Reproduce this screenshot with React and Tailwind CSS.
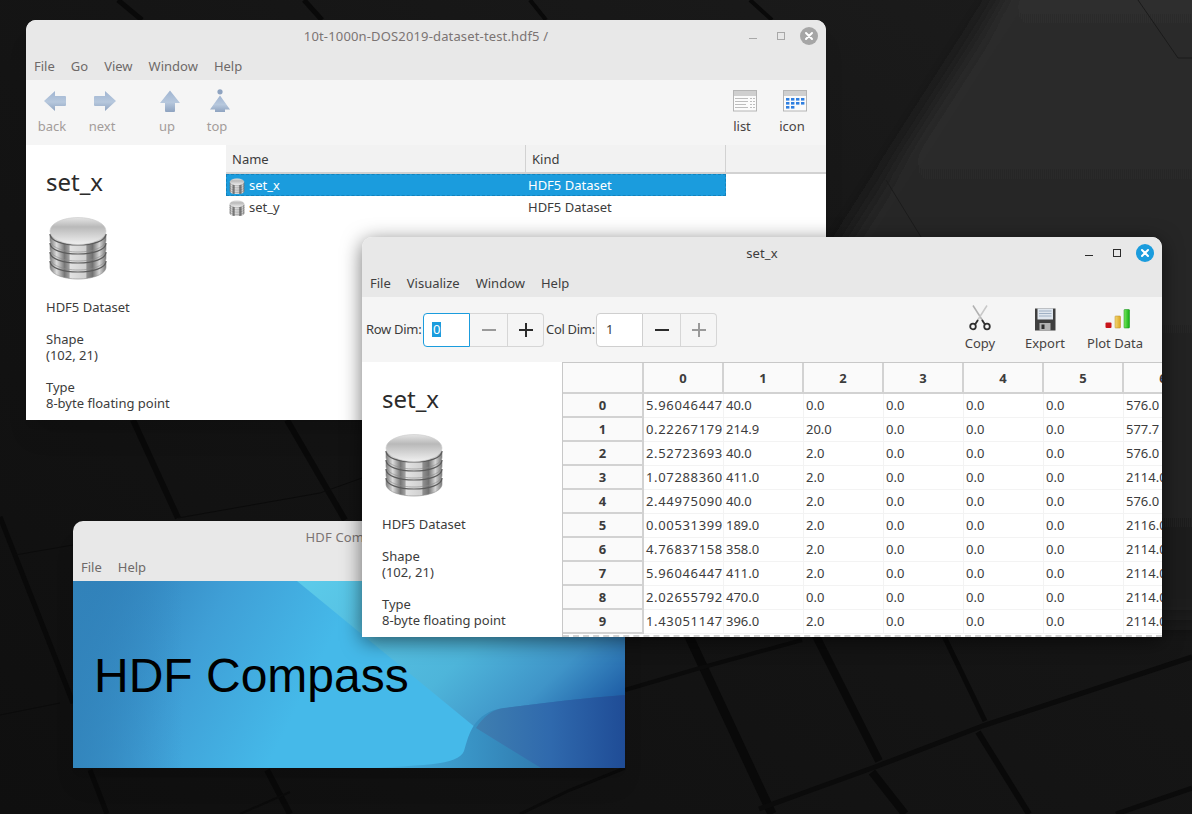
import React from 'react';

const rows = [
  ['5.96046447e-07', '40.0', '0.0', '0.0', '0.0', '0.0', '576.0'],
  ['0.22267179e-01', '214.9', '20.0', '0.0', '0.0', '0.0', '577.7'],
  ['2.52723693e-05', '40.0', '2.0', '0.0', '0.0', '0.0', '576.0'],
  ['1.07288360e-06', '411.0', '2.0', '0.0', '0.0', '0.0', '2114.0'],
  ['2.44975090e-05', '40.0', '2.0', '0.0', '0.0', '0.0', '576.0'],
  ['0.00531399', '189.0', '2.0', '0.0', '0.0', '0.0', '2116.0'],
  ['4.76837158e-07', '358.0', '2.0', '0.0', '0.0', '0.0', '2114.0'],
  ['5.96046447e-07', '411.0', '2.0', '0.0', '0.0', '0.0', '2114.0'],
  ['2.02655792e-06', '470.0', '0.0', '0.0', '0.0', '0.0', '2114.0'],
  ['1.43051147e-06', '396.0', '2.0', '0.0', '0.0', '0.0', '2114.0'],
];

function Wallpaper() {
  return (
    <svg className="absolute inset-0" width="1192" height="814" viewBox="0 0 1192 814">
      <defs>
        <linearGradient id="wall" x1="0" y1="1" x2="1" y2="0">
          <stop offset="0" stopColor="#0f0f0f" />
          <stop offset="0.55" stopColor="#151515" />
          <stop offset="1" stopColor="#1c1c1c" />
        </linearGradient>
        <linearGradient id="wallLight" x1="0" y1="0" x2="0" y2="1">
          <stop offset="0" stopColor="#2e2e2e" />
          <stop offset="1" stopColor="#1d1d1d" />
        </linearGradient>
        <filter id="soft"><feGaussianBlur stdDeviation="11" /></filter>
      </defs>
      <rect width="1192" height="814" fill="url(#wall)" />
      <polygon points="1026,-40 1232,-40 1232,620 840,620 840,250" fill="url(#wallLight)" filter="url(#soft)" />
      <g stroke="#090909" fill="none">
        <path d="M686 630L772 814" strokeWidth="9" />
        <path d="M813 630L879 761" strokeWidth="8" />
        <path d="M872 772L905 814" strokeWidth="8" />
        <path d="M941 630L985 721" strokeWidth="5" />
        <path d="M978 732L1029 814" strokeWidth="6" />
        <path d="M133 420L178 518" strokeWidth="6" />
        <path d="M287 420L345 520" strokeWidth="6" />
        <path d="M0 517L73 703" strokeWidth="5" />
        <path d="M90 770L107 814" strokeWidth="5" />
        <path d="M267 770L290 814" strokeWidth="6" />
        <path d="M118 0L142 20" strokeWidth="5" />
        <path d="M304 0L322 20" strokeWidth="5" />
        <path d="M530 0L546 20" strokeWidth="4" />
        <path d="M750 0L772 20" strokeWidth="4" />
      </g>
      <g stroke="#0b0b0b" fill="none">
        <path d="M759 809L875 767L985 725L1192 657" strokeWidth="5" />
        <path d="M625 690L700 668L802 640" strokeWidth="4" />
        <path d="M1116 814L1192 788" strokeWidth="5" />
        <path d="M15 555L73 545" strokeWidth="1" />
        <path d="M0 715L60 703" strokeWidth="1" />
        <path d="M178 518L320 493L362 478" strokeWidth="1" />
        <path d="M625 768L570 790L520 814" strokeWidth="3" />
        <path d="M290 792L240 814" strokeWidth="2" />
      </g>
      <path d="M1138 0L1178 58H1192M886 180L921 237" stroke="#1b1b1b" fill="none" />
    </svg>
  );
}

function DatasetIcon({ size = 62 }) {
  return (
    <svg width={size} height={(size * 64) / 62} viewBox="0 0 62 64">
      <defs>
        <linearGradient id="dsBand" x1="0" y1="0" x2="1" y2="0">
          <stop offset="0" stopColor="#7c7c7c" />
          <stop offset="0.12" stopColor="#dcdcdc" />
          <stop offset="0.26" stopColor="#777777" />
          <stop offset="0.34" stopColor="#a0a0a0" />
          <stop offset="0.36" stopColor="#e2e2e2" />
          <stop offset="0.64" stopColor="#d0d0d0" />
          <stop offset="0.66" stopColor="#8f8f8f" />
          <stop offset="0.76" stopColor="#727272" />
          <stop offset="0.88" stopColor="#d6d6d6" />
          <stop offset="1" stopColor="#787878" />
        </linearGradient>
        <linearGradient id="dsTop" x1="0" y1="0" x2="0" y2="1">
          <stop offset="0" stopColor="#e4e4e4" />
          <stop offset="0.35" stopColor="#b9b9b9" />
          <stop offset="1" stopColor="#f0f0f0" />
        </linearGradient>
      </defs>
      {[40, 31, 22, 13].map((y) => (
        <g key={y}>
          <path
            d={`M3 ${y + 5}V${y + 11}C3 ${y + 18} 16 ${y + 23} 31 ${y + 23}S59 ${y + 18} 59 ${y + 11}V${y + 5}Z`}
            fill="url(#dsBand)"
            stroke="#8a8a8a"
            strokeWidth="0.6"
          />
          <path
            d={`M3 ${y + 5}C3 ${y + 12} 16 ${y + 16} 31 ${y + 16}S59 ${y + 12} 59 ${y + 5}`}
            fill="none"
            stroke="#5c5c5c"
            strokeWidth="1.2"
          />
        </g>
      ))}
      <ellipse cx="31" cy="15" rx="28" ry="13.5" fill="url(#dsTop)" stroke="#c9c9c9" strokeWidth="0.6" />
    </svg>
  );
}

function NavIcon({ kind }) {
  const paths = {
    back: 'M1 12L12 2V7H22Q23 7 23 8V16Q23 17 22 17H12V22Z',
    next: 'M23 12L12 2V7H2Q1 7 1 8V16Q1 17 2 17H12V22Z',
    up: 'M12 1.5L22 14H17V22Q17 23 16 23H8Q7 23 7 22V14H2Z',
    top: 'M12 6.5L22 20.5H17V23H7V20.5H2Z',
  };
  return (
    <svg width="24" height="24" viewBox="0 0 24 24">
      <defs>
        <linearGradient id="navFill" x1="0" y1="0" x2="0" y2="1">
          <stop offset="0" stopColor="#9fb4d1" />
          <stop offset="0.55" stopColor="#b7c8dd" />
          <stop offset="1" stopColor="#8ea3c0" />
        </linearGradient>
      </defs>
      <path d={paths[kind]} fill="url(#navFill)" />
      {kind === 'top' && <circle cx="12" cy="2.8" r="2.6" fill="#8ea3c0" />}
    </svg>
  );
}

function ViewIcon({ grid }) {
  return (
    <svg width="24" height="22" viewBox="0 0 24 22">
      <rect x="0.5" y="0.5" width="23" height="20.5" fill="#fbfbfb" stroke="#b5b5b5" />
      <rect x="1" y="1" width="22" height="5" fill="#cfcfcf" />
      {grid ? (
        [8, 12, 16].map((y) =>
          [3, 8, 13, 18].map((x) =>
            y === 16 && x > 8 ? null : <rect key={`${x}-${y}`} x={x} y={y} width="3.4" height="2.6" fill="#2f7fe0" />
          )
        )
      ) : (
        <g fill="#bdbdbd">
          <rect x="2" y="8" width="13" height="1" />
          <rect x="2" y="11" width="13" height="1" />
          <rect x="2" y="14" width="11" height="1" />
          <rect x="2" y="17" width="13" height="1" />
          <rect x="17" y="8" width="2" height="1" />
          <rect x="20" y="8" width="2" height="1" />
          <rect x="17" y="11" width="2" height="1" />
          <rect x="20" y="11" width="2" height="1" />
          <rect x="17" y="14" width="2" height="1" />
          <rect x="20" y="14" width="2" height="1" />
          <rect x="17" y="17" width="2" height="1" />
          <rect x="20" y="17" width="2" height="1" />
        </g>
      )}
    </svg>
  );
}

function ScissorsIcon() {
  return (
    <svg width="24" height="26" viewBox="0 0 24 26">
      <path d="M5 0.5L15.5 17" stroke="#b0b0b0" strokeWidth="1.5" />
      <path d="M19 0.5L8.5 17" stroke="#c8c8c8" strokeWidth="1.5" />
      <circle cx="5" cy="21.5" r="2.8" fill="none" stroke="#2f2f2f" strokeWidth="1.8" />
      <circle cx="19" cy="21.5" r="2.8" fill="none" stroke="#2f2f2f" strokeWidth="1.8" />
      <path d="M7 19.5L10 15M17 19.5L14 15" stroke="#2f2f2f" strokeWidth="1.8" />
    </svg>
  );
}

function FloppyIcon() {
  return (
    <svg width="22" height="23" viewBox="0 0 22 23">
      <path d="M1 0.5H21.5V22.5H1Z" fill="#3f3f3f" />
      <rect x="3.5" y="0.5" width="15.5" height="11" fill="#dfe6ee" />
      <path d="M5 3H17.5M5 5.5H17.5M5 8H17.5" stroke="#9fb0c4" strokeWidth="1" />
      <rect x="5.5" y="15" width="11" height="7.5" fill="#b4b4b4" />
      <rect x="7.5" y="16.5" width="3" height="4.5" fill="#303030" />
    </svg>
  );
}

function BarsIcon() {
  return (
    <svg width="26" height="20" viewBox="0 0 26 20" className="ml-[6px] mb-[2px]">
      <defs>
        <linearGradient id="barGreen" x1="0" y1="0" x2="1" y2="0">
          <stop offset="0" stopColor="#7be85f" />
          <stop offset="1" stopColor="#0fae11" />
        </linearGradient>
        <linearGradient id="barYellow" x1="0" y1="0" x2="1" y2="0">
          <stop offset="0" stopColor="#f3d777" />
          <stop offset="1" stopColor="#dca721" />
        </linearGradient>
      </defs>
      <rect x="0.5" y="13.5" width="6" height="5.5" rx="1" fill="#c8141a" />
      <rect x="10" y="7" width="5.5" height="12" rx="0.7" fill="url(#barYellow)" stroke="#b98b20" strokeWidth="0.5" />
      <rect x="19" y="0.5" width="5.5" height="18.5" rx="0.7" fill="url(#barGreen)" stroke="#0c8c12" strokeWidth="0.5" />
    </svg>
  );
}

function WindowControls({ active }) {
  return (
    <div className="absolute right-[8px] top-[7px] flex items-center">
      <div className={`w-[8px] h-px mt-[5px] ${active ? 'bg-[#2b2b2b]' : 'bg-[#a8a8a8]'}`}></div>
      <div className={`ml-[20px] w-[8px] h-[8px] border ${active ? 'border-[#2b2b2b]' : 'border-[#a8a8a8]'}`}></div>
      <div
        className={`ml-[15px] w-[18px] h-[18px] rounded-full flex items-center justify-center ${
          active ? 'bg-[#1b9cdd]' : 'bg-[#a6a6a6]'
        }`}
      >
        <svg width="10" height="10" viewBox="0 0 10 10">
          <path d="M2 2L8 8M8 2L2 8" stroke="#fff" strokeWidth="2" strokeLinecap="round" />
        </svg>
      </div>
    </div>
  );
}

function TitleBar({ title, active, controls = true, menu }) {
  return (
    <div className="bg-[#e8e8e8] h-[60px] shrink-0">
      <div
        className={`relative h-[32px] pt-[2px] flex items-center justify-center text-[13px] tracking-[0.15px] ${
          active ? 'text-[#3c3c3c]' : 'text-[#7b7473]'
        }`}
      >
        {title}
        {controls && <WindowControls active={active} />}
      </div>
      <div
        className={`h-[28px] pt-[2px] flex items-center pl-[8px] gap-[16px] text-[13px] ${
          active ? 'text-[#3f3f3f]' : 'text-[#6e6a69]'
        }`}
      >
        {menu.map((m) => (
          <span key={m}>{m}</span>
        ))}
      </div>
    </div>
  );
}

function NavButton({ kind, label, dim }) {
  return (
    <div className={`w-[50px] flex flex-col items-center pt-[9px] text-[13px] ${dim ? 'text-[#a39c9a]' : 'text-[#474342]'}`}>
      <div className="h-[24px] ml-[6px] flex items-center justify-center">
        {kind === 'list' && <ViewIcon />}
        {kind === 'icon' && <ViewIcon grid />}
        {kind !== 'list' && kind !== 'icon' && <NavIcon kind={kind} />}
      </div>
      <span className="mt-[4px] leading-[18px]">{label}</span>
    </div>
  );
}

function Sidebar() {
  return (
    <div className="w-[200px] shrink-0 bg-white pl-[20px] pt-[21px] text-[13px] leading-[16px] text-[#3c3c3c]">
      <div className="text-[24px] leading-[32px] text-[#2b2b2b]">set_x</div>
      <div className="mt-[18px] pl-px h-[64px]">
        <DatasetIcon size={62} />
      </div>
      <div className="mt-[19px]">HDF5 Dataset</div>
      <div className="mt-[16px]">Shape</div>
      <div>(102, 21)</div>
      <div className="mt-[16px]">Type</div>
      <div>8-byte floating point</div>
    </div>
  );
}

function SpinGroup({ value, focused, minusDim, plusDim }) {
  return (
    <div className="flex h-[34px]">
      <div
        className={`w-[47px] bg-white rounded-l-[4px] border flex items-center pl-[8px] text-[13px] text-[#3c3c3c] ${
          focused ? 'border-[#1b9cdd]' : 'border-[#cfcfcf]'
        }`}
      >
        <span className={focused ? 'bg-[#1b9cdd] text-white leading-[15px] px-px' : 'px-px'}>{value}</span>
      </div>
      <div className="w-[38px] border-y border-r border-[#d6d6d6] flex items-center justify-center bg-[#f5f5f5]">
        <svg width="16" height="16" viewBox="0 0 16 16">
          <path d="M1 8H15" stroke={minusDim ? '#9a9a9a' : '#2b2b2b'} strokeWidth="2" />
        </svg>
      </div>
      <div className="w-[36px] border-y border-r rounded-r-[4px] border-[#d6d6d6] flex items-center justify-center bg-[#f5f5f5]">
        <svg width="16" height="16" viewBox="0 0 16 16">
          <path d="M1 8H15M8 1V15" stroke={plusDim ? '#9a9a9a' : '#2b2b2b'} strokeWidth="2" />
        </svg>
      </div>
    </div>
  );
}

function ActionButton({ icon, label, width }) {
  return (
    <div className={`flex flex-col items-center self-start pt-[8px] ${width} text-[13px] text-[#474342]`}>
      <div className="h-[26px] flex items-end justify-center">{icon}</div>
      <span className="mt-[3px] leading-[18px]">{label}</span>
    </div>
  );
}

function DataTable() {
  return (
    <div className="flex-1 min-w-0 overflow-hidden bg-white border-l border-t border-[#c8c8c8] text-[13px] text-[#3c3c3c]">
      <div className="grid grid-cols-[81px_repeat(7,80px)] auto-rows-[24px] grid-rows-[31px]">
        <div className="bg-[#fafafa] border-r-2 border-b-2 border-[#d2d2d2]"></div>
        {[0, 1, 2, 3, 4, 5, 6].map((c) => (
          <div key={c} className="bg-[#fafafa] border-r-2 border-b-2 border-[#d2d2d2] pt-[2px] flex items-center justify-center font-bold">
            {c}
          </div>
        ))}
        {rows.map((row, i) => (
          <React.Fragment key={i}>
            <div className="bg-[#fafafa] border-r-2 border-b-2 border-[#d2d2d2] pt-[2px] flex items-center justify-center font-bold">{i}</div>
            {row.map((v, j) => (
              <div
                key={j}
                className={`border-r border-b border-[#f3f3f3] pl-[2px] leading-[22px] whitespace-nowrap overflow-hidden ${
                  j === 0 ? 'tracking-[0.65px]' : ''
                }`}
              >
                {v}
              </div>
            ))}
          </React.Fragment>
        ))}
      </div>
      <div className="border-t-2 border-dashed border-[#d2d2d2] mt-[1px]"></div>
    </div>
  );
}

function SplashArt() {
  return (
    <svg className="absolute inset-0" width="552" height="187" viewBox="0 0 552 187">
      <defs>
        <linearGradient id="splashCorner" x1="0" y1="0" x2="230" y2="115" gradientUnits="userSpaceOnUse">
          <stop offset="0" stopColor="#2d78b3" />
          <stop offset="0.55" stopColor="#3f9fd6" />
          <stop offset="1" stopColor="#45b9e9" />
        </linearGradient>
        <linearGradient id="splashLeft" x1="0" y1="0" x2="1" y2="0">
          <stop offset="0" stopColor="#3284bb" stopOpacity="0.85" />
          <stop offset="1" stopColor="#3284bb" stopOpacity="0" />
        </linearGradient>
        <linearGradient id="splashWedge" x1="0" y1="0" x2="1" y2="0.6">
          <stop offset="0" stopColor="#5ccbea" />
          <stop offset="0.55" stopColor="#4eb5da" />
          <stop offset="0.8" stopColor="#3f94c8" />
          <stop offset="1" stopColor="#1f5ea6" />
        </linearGradient>
        <linearGradient id="splashCurve" x1="0" y1="0" x2="1" y2="0">
          <stop offset="0" stopColor="#3f7fb0" />
          <stop offset="0.5" stopColor="#2f69ad" />
          <stop offset="1" stopColor="#1f4c96" />
        </linearGradient>
        <linearGradient id="splashLow" x1="0" y1="0" x2="1" y2="0">
          <stop offset="0" stopColor="#45b5e3" />
          <stop offset="0.7" stopColor="#2f78ad" />
          <stop offset="1" stopColor="#28578f" />
        </linearGradient>
      </defs>
      <rect width="552" height="187" fill="url(#splashCorner)" />
      <rect width="110" height="187" fill="url(#splashLeft)" />
      <polygon points="224,0 552,0 552,187 468,187 403,147" fill="url(#splashWedge)" />
      <path d="M301 187C350 184 386 184 391 170C396 154 400 131 431 127C470 122 510 117 552 114V187Z" fill="url(#splashLow)" />
      <path d="M403 147C410 136 420 128 431 127C470 122 510 117 552 114V187H468Z" fill="url(#splashCurve)" />
    </svg>
  );
}

export default function App() {
  return (
    <div className="relative w-[1192px] h-[814px] overflow-hidden bg-[#111] font-['Noto_Sans',sans-serif]">
      <Wallpaper />

      {/* file browser */}
      <div className="absolute left-[26px] top-[20px] w-[800px] h-[400px] flex flex-col rounded-t-[10px] overflow-hidden bg-white shadow-xl">
        <TitleBar title="10t-1000n-DOS2019-dataset-test.hdf5 /" menu={['File', 'Go', 'View', 'Window', 'Help']} />
        <div className="h-[65px] shrink-0 bg-[#f5f5f5] flex pl-px pr-[9px]">
          <NavButton kind="back" label="back" dim />
          <NavButton kind="next" label="next" dim />
          <div className="w-[15px]"></div>
          <NavButton kind="up" label="up" dim />
          <NavButton kind="top" label="top" dim />
          <div className="flex-1"></div>
          <NavButton kind="list" label="list" />
          <NavButton kind="icon" label="icon" />
        </div>
        <div className="flex-1 flex min-h-0">
          <Sidebar />
          <div className="flex-1 min-w-0 text-[13px] text-[#3c3c3c]">
            <div className="h-[29px] bg-[#f2f2f2] border-b-2 border-[#d2d2d2] flex">
              <div className="w-[300px] border-r border-[#d2d2d2] pl-[6px] leading-[28px]">Name</div>
              <div className="w-[200px] border-r border-[#d2d2d2] pl-[6px] leading-[28px]">Kind</div>
            </div>
            <div className="w-[500px] h-[22px] pt-[2px] bg-[#1b9cdd] text-white flex items-center border border-dashed border-[#1483bd]">
              <div className="w-[301px] flex items-center pl-[2px] gap-[4px]">
                <DatasetIcon size={16} />
                set_x
              </div>
              <div>HDF5 Dataset</div>
            </div>
            <div className="w-[500px] h-[22px] pt-[2px] flex items-center px-px">
              <div className="w-[301px] flex items-center pl-[2px] gap-[4px]">
                <DatasetIcon size={16} />
                set_y
              </div>
              <div>HDF5 Dataset</div>
            </div>
          </div>
        </div>
      </div>

      {/* splash */}
      <div className="absolute left-[73px] top-[521px] w-[552px] h-[247px] flex flex-col rounded-t-[10px] overflow-hidden shadow-xl">
        <TitleBar title="HDF Compass" controls={false} menu={['File', 'Help']} />
        <div className="relative flex-1 pl-[21px] pt-[66px]">
          <SplashArt />
          <div className="relative font-['Liberation_Sans',sans-serif] text-[48px] leading-[58px] text-black">HDF Compass</div>
        </div>
      </div>

      {/* dataset view */}
      <div className="absolute left-[362px] top-[237px] w-[800px] h-[400px] flex flex-col rounded-t-[10px] overflow-hidden bg-white shadow-[0_4px_20px_rgba(0,0,0,0.55)]">
        <TitleBar title="set_x" active menu={['File', 'Visualize', 'Window', 'Help']} />
        <div className="h-[65px] shrink-0 bg-[#f5f5f5] flex items-center pl-[4px] pr-[12px] text-[13px] text-[#3c3c3c]">
          <div className="w-[57px] whitespace-nowrap tracking-[-0.3px]">Row Dim:</div>
          <SpinGroup value="0" focused minusDim />
          <div className="w-[50px] ml-[2px] whitespace-nowrap tracking-[-0.3px]">Col Dim:</div>
          <SpinGroup value="1" plusDim />
          <div className="flex-1"></div>
          <ActionButton icon={<ScissorsIcon />} label="Copy" width="w-[60px]" />
          <ActionButton icon={<FloppyIcon />} label="Export" width="w-[70px]" />
          <ActionButton icon={<BarsIcon />} label="Plot Data" width="w-[70px]" />
        </div>
        <div className="flex-1 flex min-h-0">
          <Sidebar />
          <DataTable />
        </div>
      </div>
    </div>
  );
}
